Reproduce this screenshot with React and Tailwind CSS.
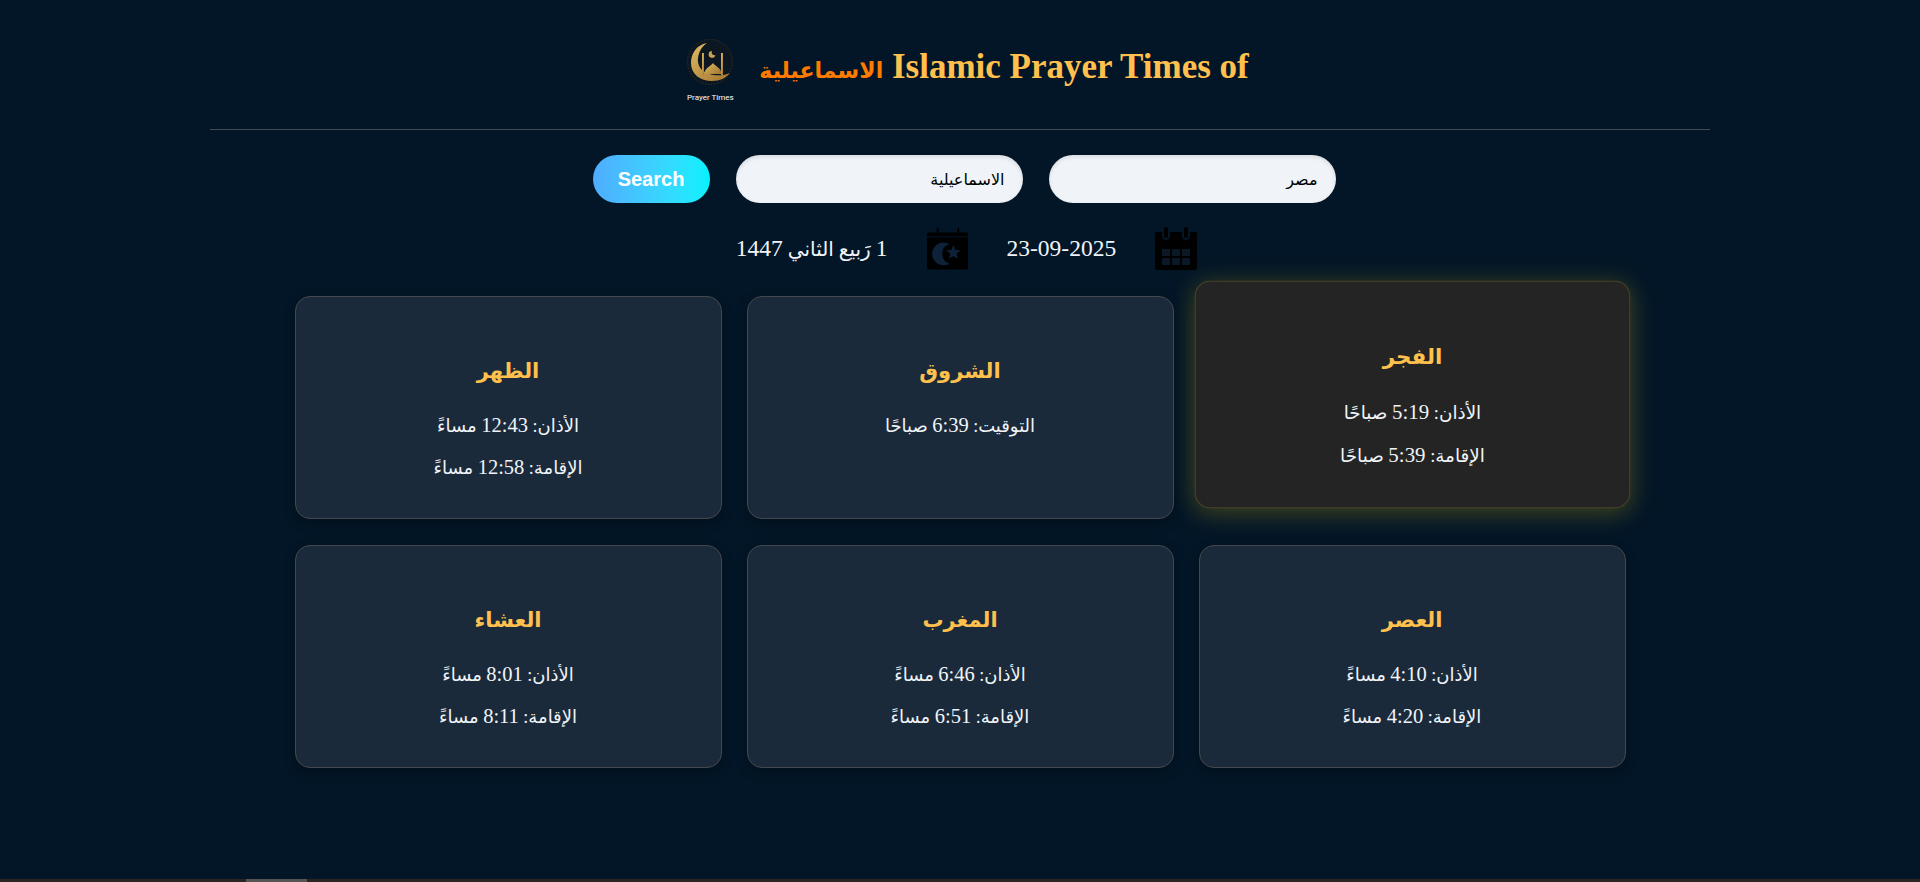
const prayers = [
  { name: "الفجر", lines: [["الأذان:", "5:19", "صباحًا"], ["الإقامة:", "5:39", "صباحًا"]], active: true },
  { name: "الشروق", lines: [["التوقيت:", "6:39", "صباحًا"]] },
  { name: "الظهر", lines: [["الأذان:", "12:43", "مساءً"], ["الإقامة:", "12:58", "مساءً"]] },
  { name: "العصر", lines: [["الأذان:", "4:10", "مساءً"], ["الإقامة:", "4:20", "مساءً"]] },
  { name: "المغرب", lines: [["الأذان:", "6:46", "مساءً"], ["الإقامة:", "6:51", "مساءً"]] },
  { name: "العشاء", lines: [["الأذان:", "8:01", "مساءً"], ["الإقامة:", "8:11", "مساءً"]] },
];

function Logo() {
  return (
    <div className="flex flex-col items-center w-[48px]">
      <svg viewBox="0 0 48 48" className="w-[48px] h-[48px] shrink-0">
        <defs>
          <linearGradient id="gold" x1="0" y1="0" x2="1" y2="1">
            <stop offset="0" stopColor="#e0bb62" />
            <stop offset="1" stopColor="#a0742f" />
          </linearGradient>
        </defs>
        <circle cx="24" cy="24" r="23.5" fill="#0c1722" />
        <circle cx="24" cy="24" r="22.5" fill="none" stroke="#3a3a2c" strokeDasharray="1 2" />
        {/* crescent */}
        <path d="M21 5 C10 7 5 16 5 25 C5 36 14 43 26 43 C34 43 40 40 44 35 C35 39 22 38 15 31 C9 24 12 11 21 5 Z" fill="url(#gold)" />
        {/* mosque */}
        <path d="M19 36 C18 30 24 29 27 25 C30 29 36 30 35 36 Z" fill="url(#gold)" />
        <rect x="16" y="15" width="2" height="22" fill="url(#gold)" />
        <rect x="35" y="15" width="2" height="22" fill="url(#gold)" />
        <path d="M26 13 a3.4 3.4 0 1 0 3.4 4 a2.8 2.8 0 0 1 -3.4 -4 Z" fill="#c9a455" />
      </svg>
      <span className="text-[8px] leading-none text-white mt-[8px] font-['Roboto',sans-serif] whitespace-nowrap">Prayer Times</span>
    </div>
  );
}

function CalendarIcon() {
  return (
    <svg viewBox="0 0 44 44" className="w-[44px] h-[44px] shrink-0">
      <path d="M3 5 H41 Q43 5 43 7 V41 Q43 43 41 43 H3 Q1 43 1 41 V7 Q1 5 3 5 Z" fill="#000" />
      {/* rings */}
      <rect x="8" y="0" width="8" height="13" rx="4" fill="#031627" />
      <rect x="28" y="0" width="8" height="13" rx="4" fill="#031627" />
      <rect x="10" y="0" width="4" height="11" rx="2" fill="#000" />
      <rect x="30" y="0" width="4" height="11" rx="2" fill="#000" />
      {/* grid */}
      {[8, 18, 28].map((x) =>
        [22, 31].map((y) => <rect key={`${x}-${y}`} x={x} y={y} width="8" height="7" fill="#0a1826" />)
      )}
    </svg>
  );
}

function MoonCalendar() {
  return (
    <svg viewBox="0 0 44 44" className="w-[43px] h-[44px] shrink-0">
      <rect x="11" y="0" width="2" height="6" fill="#000" />
      <rect x="32" y="0" width="2" height="6" fill="#000" />
      <path d="M1 7 Q1 5 3 5 L41 5 Q43 5 43 7 L43 9 L1 9 Z" fill="#000" />
      <path d="M1 10 L43 10 L43 41 Q43 43 41 43 L3 43 Q1 43 1 41 Z" fill="#000" />
      <path d="M24 17 A11.7 11.7 0 1 0 24 37 A10.5 10.5 0 0 1 24 17 Z" fill="#0d2238" />
      <path d="M28 18 L30 23 L35.4 23.4 L31.2 26.8 L32.6 32 L28 29.2 L23.4 32 L24.8 26.8 L20.6 23.4 L26 23 Z" fill="#0d2238" />
    </svg>
  );
}

function PrayerCard({ name, lines, active }) {
  return (
    <div
      className={
        active
          ? "h-[223px] rounded-[15px] border border-[#4a4326] bg-[#242424] pt-[56px] text-center -translate-y-[13px] scale-[1.02] shadow-[0_4px_24px_rgba(255,215,0,0.25)]"
          : "h-[223px] rounded-[15px] border border-[#44494d] bg-[#1b2a3a] pt-[56px] text-center shadow-[0_4px_12px_rgba(0,0,0,0.3)]"
      }
    >
      <h3 className="text-[21px] leading-[36px] font-bold text-[#ffc04d] mb-[23px]">{name}</h3>
      {lines.map(([label, time, suffix]) => (
        <p key={label} className="text-[18px] leading-[27px] text-[#f0f4f8] mb-[14px]">
          {label} <span className="text-[20.5px]">{time}</span> {suffix}
        </p>
      ))}
    </div>
  );
}

export default function App() {
  return (
    <div dir="rtl" className="relative h-screen overflow-hidden bg-[#031627] font-['Liberation_Serif','DejaVu_Sans',serif] text-[#f0f4f8]">
      <header dir="ltr" className="mx-auto w-[1500px] h-[130px] border-b border-[#44494d] flex items-start justify-center pt-[38px] gap-[25px] pl-[15px]">
        <Logo />
        <h1 dir="rtl" className="text-[35px] leading-[40px] font-bold text-[#ffc04d] mt-[9px] whitespace-nowrap">
          <span dir="ltr">Islamic Prayer Times of</span> <span className="text-[22px] text-[#ff7b00]">الاسماعيلية</span>
        </h1>
      </header>

      <div className="flex justify-center items-center gap-[26px] mt-[25px] pl-[8px]">
        <input readOnly value="مصر" className="w-[287px] h-[48px] rounded-[25px] bg-[#f0f4f8] text-black text-[16px] px-[18px] shadow-[inset_0_2px_4px_rgba(0,0,0,0.1)] font-['Liberation_Sans','DejaVu_Sans',sans-serif] outline-none" />
        <input readOnly value="الاسماعيلية" className="w-[287px] h-[48px] rounded-[25px] bg-[#f0f4f8] text-black text-[16px] px-[18px] shadow-[inset_0_2px_4px_rgba(0,0,0,0.1)] font-['Liberation_Sans','DejaVu_Sans',sans-serif] outline-none" />
        <button className="w-[117px] h-[48px] rounded-[25px] bg-gradient-to-r from-[#4facfe] to-[#00f2fe] text-white font-bold text-[20px] font-['Liberation_Sans',sans-serif]">Search</button>
      </div>

      <div className="flex justify-center items-center mt-[24px] h-[44px] text-[20px] pl-[14px]">
        <CalendarIcon />
        <span dir="ltr" className="mx-[38px] text-[23.5px]">23-09-2025</span>
        <MoonCalendar />
        <span className="mr-[38px]">
          <span className="text-[23.5px]">1</span> رَبيع الثاني <span className="text-[23.5px]">1447</span>
        </span>
      </div>

      <div className="grid grid-cols-[427px_427px_427px] justify-center gap-x-[25px] gap-y-[26px] mt-[25px]">
        {prayers.map((p) => (
          <PrayerCard key={p.name} {...p} />
        ))}
      </div>

      <div dir="ltr" className="absolute left-0 right-0 bottom-0 h-[3px] bg-[#2a2520]">
        <div className="ml-[246px] w-[61px] h-full bg-[#555]" />
      </div>
    </div>
  );
}
